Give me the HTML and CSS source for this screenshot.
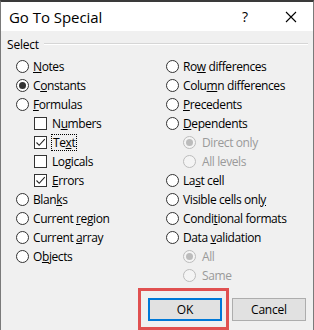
FILE: index.html
```html
<!DOCTYPE html>
<html>
<head>
<meta charset="utf-8">
<link rel="stylesheet" href="styles.css">
</head>
<body>
<div class="window">
  <div class="titlebar">
    <span class="title">Go To Special</span>
    <span class="help">?</span>
    <span class="close">
      <svg width="12" height="12" viewBox="0 0 12 12"><path d="M1 1 L11 11 M11 1 L1 11" stroke="#000" stroke-width="1.1" fill="none"/></svg>
    </span>
  </div>
  <div class="body">
    <div class="group-head"><span class="group-label">Select</span><span class="group-line"></span></div>
    <div class="cols">
      <div class="col left">
        <div class="row"><span class="radio"></span><span class="lbl"><u>N</u>otes</span></div>
        <div class="row"><span class="radio on"></span><span class="lbl">C<u>o</u>nstants</span></div>
        <div class="row"><span class="radio"></span><span class="lbl"><u>F</u>ormulas</span></div>
        <div class="row sub"><span class="check"></span><span class="lbl">N<u>u</u>mbers</span></div>
        <div class="row sub"><span class="check on"><svg width="11" height="11" viewBox="0 0 11 11"><path d="M1.5 5.5 L4.2 8.3 L9.8 2.2" stroke="#222" stroke-width="1.1" fill="none"/></svg></span><span class="lbl focus">Te<u>x</u>t</span></div>
        <div class="row sub"><span class="check"></span><span class="lbl">Lo<u>g</u>icals</span></div>
        <div class="row sub"><span class="check on"><svg width="11" height="11" viewBox="0 0 11 11"><path d="M1.5 5.5 L4.2 8.3 L9.8 2.2" stroke="#222" stroke-width="1.1" fill="none"/></svg></span><span class="lbl"><u>E</u>rrors</span></div>
        <div class="row"><span class="radio"></span><span class="lbl">Blan<u>k</u>s</span></div>
        <div class="row"><span class="radio"></span><span class="lbl">Current <u>r</u>egion</span></div>
        <div class="row"><span class="radio"></span><span class="lbl">Current <u>a</u>rray</span></div>
        <div class="row"><span class="radio"></span><span class="lbl">O<u>b</u>jects</span></div>
      </div>
      <div class="col right">
        <div class="row"><span class="radio"></span><span class="lbl">Ro<u>w</u> differences</span></div>
        <div class="row"><span class="radio"></span><span class="lbl">Colu<u>m</u>n differences</span></div>
        <div class="row"><span class="radio"></span><span class="lbl"><u>P</u>recedents</span></div>
        <div class="row"><span class="radio"></span><span class="lbl"><u>D</u>ependents</span></div>
        <div class="row sub dis"><span class="radio on"></span><span class="lbl">Direct only</span></div>
        <div class="row sub dis"><span class="radio"></span><span class="lbl">All levels</span></div>
        <div class="row"><span class="radio"></span><span class="lbl">La<u>s</u>t cell</span></div>
        <div class="row"><span class="radio"></span><span class="lbl">Visible cells onl<u>y</u></span></div>
        <div class="row"><span class="radio"></span><span class="lbl">Condi<u>t</u>ional formats</span></div>
        <div class="row"><span class="radio"></span><span class="lbl">Data <u>v</u>alidation</span></div>
        <div class="row sub dis"><span class="radio on"></span><span class="lbl">All</span></div>
        <div class="row sub dis"><span class="radio"></span><span class="lbl">Same</span></div>
      </div>
    </div>
    <div class="buttons">
      <div class="highlight"><button class="btn default">OK</button></div>
      <button class="btn">Cancel</button>
    </div>
  </div>
</div>
</body>
</html>
```
FILE: styles.css
```css
* { box-sizing: border-box; }
html, body { margin: 0; padding: 0; }
body {
  width: 314px;
  height: 330px;
  overflow: hidden;
  background: #f0f0f0;
  font-family: "Open Sans", "Noto Sans", sans-serif;
  font-size: 12px;
  color: #000;
}
.window {
  width: 314px;
  height: 330px;
  border-top: 2px solid #3a3a3a;
  border-left: 1px solid #7a7a7a;
  border-right: 1px solid #7a7a7a;
  background: #f0f0f0;
  display: flex;
  flex-direction: column;
}
.titlebar {
  height: 29px;
  background: #fff;
  display: flex;
  align-items: center;
  padding-left: 8px;
  flex: none;
}
.title {
  font-size: 15px;
  flex: 1;
  letter-spacing: -0.05px;
}
.help {
  font-size: 14px;
  width: 20px;
  margin-right: 23px;
}
.close {
  width: 28px;
  display: flex;
  align-items: center;
}
.body {
  flex: 1;
  display: flex;
  flex-direction: column;
  position: relative;
}
.group-head {
  display: flex;
  align-items: center;
  height: 20px;
  margin-top: 3px;
  padding-left: 6px;
  padding-right: 5px;
}
.group-label { margin-right: 5px; letter-spacing: -0.2px; }
.group-line {
  flex: 1;
  background: #d6d6d6;
  border-bottom: 1px solid #fff;
  height: 2px;
}
.cols {
  display: grid;
  grid-template-columns: 150px 1fr;
  padding-left: 15px;
  margin-top: 3px;
}
.row {
  height: 19px;
  display: flex;
  align-items: center;
  white-space: nowrap;
  letter-spacing: -0.4px;
}
.row.sub { padding-left: 18px; }
.right .row.sub { padding-left: 17px; }
.lbl { margin-left: 4px; line-height: 15px; }
.sub .lbl { margin-left: 5px; }
.right .sub .lbl { margin-left: 6px; }
.radio {
  width: 13px;
  height: 13px;
  border: 1px solid #333;
  border-radius: 50%;
  background: #fff;
  display: flex;
  align-items: center;
  justify-content: center;
  flex: none;
}
.radio.on::after {
  content: "";
  width: 7px;
  height: 7px;
  border-radius: 50%;
  background: #333;
}
.check {
  width: 13px;
  height: 13px;
  border: 1px solid #333;
  background: #fff;
  display: flex;
  align-items: center;
  justify-content: center;
  flex: none;
}
.focus {
  outline: 1px dotted #000;
  outline-offset: 0;
  padding: 0 1px;
  margin-left: 3px;
}
.dis { color: #9a9a9a; }
.dis .radio { border-color: #bcbcbc; background: #f4f4f4; }
.dis .radio.on::after { background: #bcbcbc; }
.buttons {
  display: flex;
  justify-content: flex-end;
  padding-right: 7px;
  margin-top: 13px;
  gap: 10px;
}
.highlight {
  position: relative;
}
.highlight::after {
  content: "";
  position: absolute;
  left: -10px;
  top: -10px;
  right: -7px;
  bottom: -9px;
  border: 3px solid #e05050;
}
.btn {
  width: 74px;
  height: 23px;
  font-family: "Open Sans", "Noto Sans", sans-serif;
  font-size: 12px;
  background: #e1e1e1;
  border: 1px solid #adadad;
  color: #000;
  padding: 0;
  letter-spacing: -0.2px;
}
.btn.default {
  border: 2px solid #0078d7;
}
```
